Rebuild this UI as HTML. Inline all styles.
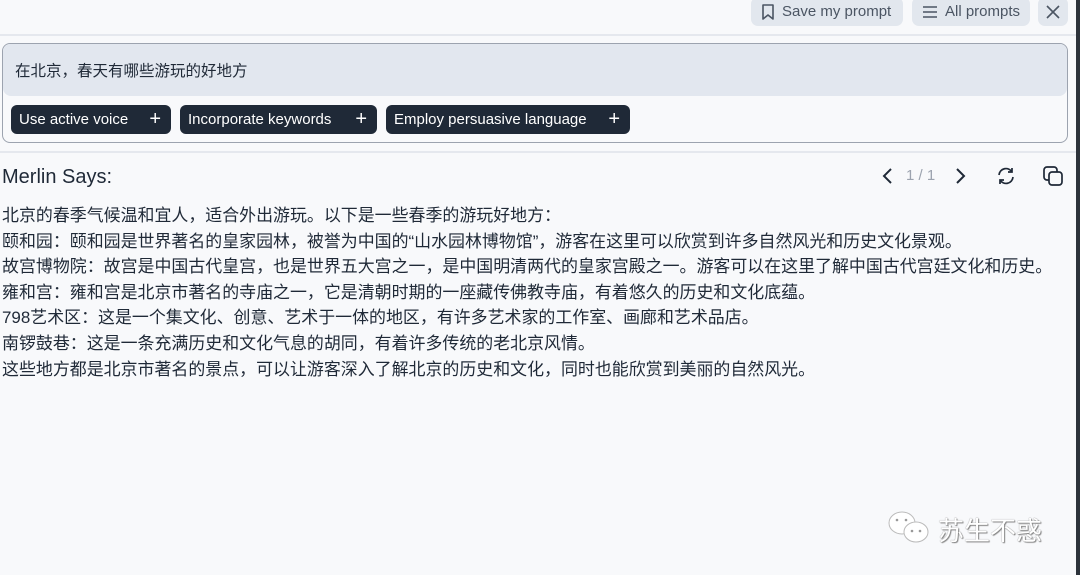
<!DOCTYPE html>
<html><head><meta charset="utf-8"><style>
*{margin:0;padding:0;box-sizing:border-box}
body{width:1080px;height:575px;background:#f8f9fb;font-family:"Liberation Sans","Noto Sans CJK SC",sans-serif;color:#1f2937;position:relative;overflow:hidden}
.top{position:absolute;top:0;left:0;width:1076px;height:36px;border-bottom:2px solid #e5e8ee}
.btn{position:absolute;top:-3px;height:29px;background:#e2e7ee;border-radius:7px;color:#4b5563;font-size:15px;display:flex;align-items:center;padding:0 9px;gap:6px}
.box{position:absolute;left:2px;top:43px;width:1066px;height:100px;border:1px solid #9ca3af;border-radius:8px;overflow:hidden}
.inp{height:52px;background:#e2e7ef;font-size:15.5px;padding:15px 12px;color:#1f2937;border-radius:7px 7px 8px 8px}
.chip{position:absolute;top:61px;height:29px;background:#1f2937;color:#fff;border-radius:6px;font-size:15px;display:flex;align-items:center;justify-content:space-between;padding:0 10px 0 8px}
.sep{position:absolute;top:151px;left:0;width:1076px;height:2px;background:#e5e8ee}
.ms{position:absolute;left:2px;top:166px;font-size:20px;color:#1f2937}
.txt{position:absolute;left:2px;top:203px;font-size:16.95px;line-height:25.6px;color:#1f2937;white-space:nowrap}
.edge{position:absolute;right:0;top:0;width:4px;height:575px;background:#2d333b}
</style></head><body>
<div class="top"></div>
<div class="btn" style="left:751px;width:152px"><svg width="16" height="18" viewBox="0 0 16 18"><path d="M3 2h10v14l-5-4-5 4z" fill="none" stroke="#4b5563" stroke-width="1.6" stroke-linejoin="round"/></svg>Save my prompt</div>
<div class="btn" style="left:912px;width:118px"><svg width="18" height="16" viewBox="0 0 18 16"><path d="M2 3h14M2 8h14M2 13h14" stroke="#4b5563" stroke-width="1.6"/></svg>All prompts</div>
<div class="btn" style="left:1038px;width:30px;padding:0 7px"><svg width="16" height="16" viewBox="0 0 16 16"><path d="M2 2l12 12M14 2L2 14" stroke="#4b5563" stroke-width="1.6"/></svg></div>
<div class="box"><div class="inp">在北京，春天有哪些游玩的好地方</div>
<div class="chip" style="left:8px;width:160px">Use active voice <span style="font-size:20px;font-weight:300">+</span></div>
<div class="chip" style="left:177px;width:197px">Incorporate keywords <span style="font-size:20px;font-weight:300">+</span></div>
<div class="chip" style="left:383px;width:244px">Employ persuasive language <span style="font-size:20px;font-weight:300">+</span></div>
</div>
<div class="sep"></div>
<div class="ms">Merlin Says:</div>
<svg style="position:absolute;left:880px;top:166px" width="16" height="20" viewBox="0 0 16 20"><path d="M11 3L4 10l7 7" fill="none" stroke="#1f2937" stroke-width="2"/></svg>
<div style="position:absolute;left:906px;top:167px;font-size:15px;color:#9ca3af">1 / 1</div>
<svg style="position:absolute;left:952px;top:166px" width="16" height="20" viewBox="0 0 16 20"><path d="M5 3l7 7-7 7" fill="none" stroke="#1f2937" stroke-width="2"/></svg>
<svg style="position:absolute;left:996px;top:166px" width="20" height="20" viewBox="0 0 20 20"><path d="M3 9a7 7 0 0 1 13-3M17 11a7 7 0 0 1-13 3M16 2v4h-4M4 18v-4h4" fill="none" stroke="#1f2937" stroke-width="1.7"/></svg>
<svg style="position:absolute;left:1042px;top:165px" width="22" height="22" viewBox="0 0 22 22"><rect x="2" y="2" width="13" height="13" rx="3" fill="none" stroke="#1f2937" stroke-width="1.7"/><rect x="7" y="7" width="13" height="13" rx="3" fill="#f8f9fb" stroke="#1f2937" stroke-width="1.7"/></svg>
<div class="txt">北京的春季气候温和宜人，适合外出游玩。以下是一些春季的游玩好地方：<br>颐和园：颐和园是世界著名的皇家园林，被誉为中国的“山水园林博物馆”，游客在这里可以欣赏到许多自然风光和历史文化景观。<br>故宫博物院：故宫是中国古代皇宫，也是世界五大宫之一，是中国明清两代的皇家宫殿之一。游客可以在这里了解中国古代宫廷文化和历史。<br>雍和宫：雍和宫是北京市著名的寺庙之一，它是清朝时期的一座藏传佛教寺庙，有着悠久的历史和文化底蕴。<br>798艺术区：这是一个集文化、创意、艺术于一体的地区，有许多艺术家的工作室、画廊和艺术品店。<br>南锣鼓巷：这是一条充满历史和文化气息的胡同，有着许多传统的老北京风情。<br>这些地方都是北京市著名的景点，可以让游客深入了解北京的历史和文化，同时也能欣赏到美丽的自然风光。</div>
<svg style="position:absolute;left:886px;top:510px" width="46" height="36" viewBox="0 0 46 36"><ellipse cx="16" cy="13" rx="13" ry="11" fill="#fff" stroke="#bbb"/><ellipse cx="30" cy="22" rx="12" ry="10" fill="#fff" stroke="#bbb"/><circle cx="11" cy="10" r="1.3" fill="#999"/><circle cx="20" cy="10" r="1.3" fill="#999"/><circle cx="26" cy="21" r="1.3" fill="#999"/><circle cx="34" cy="21" r="1.3" fill="#999"/></svg>
<div style="position:absolute;left:938px;top:511px;font-size:26px;color:#fff;text-shadow:0 0 1px #666,1px 1px 1px #888">苏生不惑</div>
<div class="edge"></div>
</body></html>
